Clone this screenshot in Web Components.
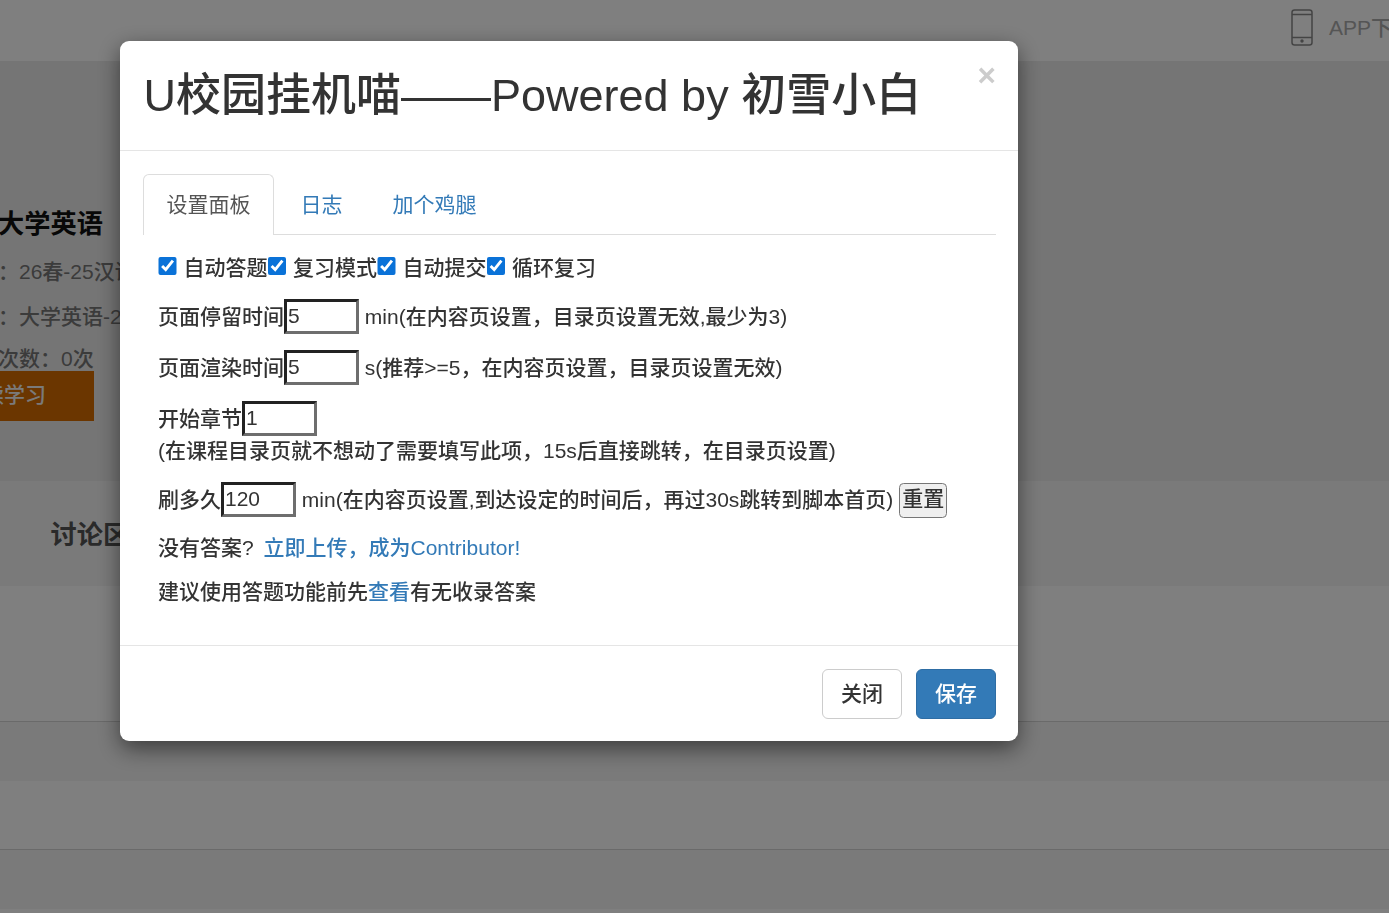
<!DOCTYPE html>
<html lang="zh">
<head>
<meta charset="utf-8">
<title>U校园挂机喵</title>
<style>
  html, body { margin: 0; height: 100%; overflow: hidden; }
  body { font: 500 21px/30px "Liberation Sans", "Noto Sans CJK SC", sans-serif; color: #333; }
</style>
</head>
<body>
<course-page></course-page>
<modal-backdrop></modal-backdrop>
<settings-modal></settings-modal>

<script>
// background page
class CoursePage extends HTMLElement {
  constructor() {
    super();
    this.attachShadow({ mode: "open" });
    this.shadowRoot.innerHTML = `
      <style>
        :host { display: block; width: 1389px; height: 913px; overflow: hidden; background: #fff; }
        .top { height: 61px; display: flex; align-items: center; gap: 15px; padding-left: 1290px; }
        .top svg { flex: none; margin-top: -5px; }
        .top span { flex: none; font-size: 21px; color: #aaa; white-space: nowrap; margin-top: -5px; }
        .hero { height: 420px; background: #ebebeb; padding-top: 144px; box-sizing: border-box; }
        .hero h2 { margin: 0 0 7px -2px; font-size: 26.25px; line-height: 38px; color: #111; white-space: nowrap; }
        .hero p { margin: 0 0 1px -2px; line-height: 44px; color: #777; white-space: nowrap; }
        .hero p:nth-of-type(3) { margin-top: -3px; }
        .hero .go { width: 94px; height: 50px; margin-top: -11px; background: #d66c00; color: #f5f5f5; line-height: 47px; padding-right: 48px; box-sizing: border-box; overflow: hidden; white-space: nowrap; direction: rtl; }
        .forum { height: 105px; background: #f5f5f5; box-sizing: border-box; padding: 34px 0 0 50.5px; font-size: 26.25px; line-height: 40px; font-weight: bold; color: #555; white-space: nowrap; }
        .plain { background: #fff; }
        .grey { background: #f5f5f5; }
        .line { border-bottom: 1px solid #d4d4d4; box-sizing: border-box; }
      </style>
      <div class="top">
        <svg width="24" height="38" viewBox="0 0 24 38" fill="none" stroke="#888" stroke-width="1.5">
          <rect x="2" y="1" width="20" height="35" rx="2.5"/>
          <path d="M2 5.5h20M2 28.5h20"/>
          <circle cx="12" cy="32" r="1.7" fill="#888" stroke="none"/>
        </svg>
        <span>APP下载</span>
      </div>
      <div class="hero">
        <h2>大学英语</h2>
        <p>：26春-25汉语</p>
        <p>：大学英语-2</p>
        <p>次数：0次</p>
        <div class="go">继续学习</div>
      </div>
      <div class="forum">讨论区</div>
      <div class="plain line" style="height:136px"></div>
      <div class="grey" style="height:59px"></div>
      <div class="plain line" style="height:69px"></div>
      <div class="grey" style="height:59px"></div>
      <div class="plain" style="height:4px"></div>
    `;
  }
}
customElements.define("course-page", CoursePage);

class ModalBackdrop extends HTMLElement {
  constructor() {
    super();
    this.attachShadow({ mode: "open" });
    this.shadowRoot.innerHTML = `
      <style>
        :host { display: block; position: fixed; inset: 0; background: rgba(0, 0, 0, .5); }
      </style>
    `;
  }
}
customElements.define("modal-backdrop", ModalBackdrop);

class TabItem extends HTMLElement {
  constructor() {
    super();
    this.attachShadow({ mode: "open" });
    this.shadowRoot.innerHTML = `
      <style>
        :host { display: block; height: 61px; box-sizing: border-box; padding: 14.5px 22.5px 0; line-height: 30px; color: #337ab7; margin-right: 3px; border: 1.5px solid transparent; border-bottom: 0; border-radius: 6px 6px 0 0; }
        :host([active]) { color: #555; background: #fff; border-color: #ddd; }
      </style>
      <slot></slot>
    `;
  }
}
customElements.define("tab-item", TabItem);

class TextLink extends HTMLElement {
  constructor() {
    super();
    this.attachShadow({ mode: "open" });
    // no whitespace around the slot, this one sits inline in a sentence
    this.shadowRoot.innerHTML = `<style>:host { display: inline; color: #337ab7; cursor: pointer; }</style><slot></slot>`;
  }
}
customElements.define("text-link", TextLink);

class CheckItem extends HTMLElement {
  constructor() {
    super();
    this.attachShadow({ mode: "open" });
    this.shadowRoot.innerHTML = `
      <style>
        :host { display: flex; align-items: center; }
        input { width: 18.75px; height: 18.75px; margin: 0 6.75px 4px 0; flex: none; accent-color: #0a72d8; }
      </style>
      <input type="checkbox" checked><slot></slot>
    `;
  }
}
customElements.define("check-item", CheckItem);

class NumInput extends HTMLElement {
  constructor() {
    super();
    this.attachShadow({ mode: "open" });
    this.shadowRoot.innerHTML = `
      <style>
        :host { display: inline-block; vertical-align: middle; margin-bottom: 3px; }
        input { display: block; width: 75px; height: 35px; box-sizing: border-box; margin: 0; padding: 0 1px 1px; border: 3px solid; border-color: #222 #6e6e6e #6e6e6e #222; background: #fff; color: #333; font: 21px "Liberation Sans", sans-serif; outline: 0; }
      </style>
      <input>
    `;
    this.shadowRoot.querySelector("input").value = this.getAttribute("value");
  }
}
customElements.define("num-input", NumInput);

class FormRow extends HTMLElement {
  constructor() {
    super();
    this.attachShadow({ mode: "open" });
    this.shadowRoot.innerHTML = `
      <style>
        :host { display: block; margin-bottom: 16px; white-space: nowrap; }
        :host([checks]) { display: flex; }
        :host([field]) { margin-bottom: 13px; }
      </style>
      <slot></slot>
    `;
  }
}
customElements.define("form-row", FormRow);

class PlainButton extends HTMLElement {
  constructor() {
    super();
    this.attachShadow({ mode: "open" });
    this.shadowRoot.innerHTML = `
      <style>
        :host { display: inline-block; box-sizing: border-box; width: 80px; height: 50px; line-height: 47px; text-align: center; border: 1.5px solid #ccc; border-radius: 6px; background: #fff; color: #333; cursor: pointer; }
        :host([primary]) { background: #337ab7; border-color: #2e6da4; color: #fff; }
      </style>
      <slot></slot>
    `;
  }
}
customElements.define("plain-button", PlainButton);

class SettingsModal extends HTMLElement {
  constructor() {
    super();
    this.attachShadow({ mode: "open" });
    this.shadowRoot.innerHTML = `
      <style>
        :host { display: block; position: fixed; left: 120px; top: 41px; width: 898px; height: 700px; box-sizing: border-box; background: #fff; border-radius: 9px; box-shadow: 0 7.5px 22.5px rgba(0, 0, 0, .5); }
        header { height: 110px; box-sizing: border-box; padding: 23px 22px 0 23.5px; border-bottom: 1.5px solid #e5e5e5; display: flex; justify-content: space-between; }
        h4 { margin: 0; font-size: 45px; line-height: 64px; font-weight: 500; color: #333; white-space: nowrap; }
        .close { font-size: 31.5px; line-height: 22px; font-weight: bold; color: #ccc; cursor: pointer; }
        main { height: 494px; box-sizing: border-box; padding: 23px 22px 0 23px; }
        nav { display: flex; border-bottom: 1.5px solid #ddd; height: 61px; box-sizing: border-box; font-weight: 400; }
        .pane { padding: 18px 15px 0; }
        .tight { margin-bottom: 14px; }
        .below { display: block; margin-top: -3px; }
        .upload { margin-left: 4px; }
        footer { height: 96px; box-sizing: border-box; border-top: 1.5px solid #e5e5e5; padding: 23px 22px 0 0; display: flex; justify-content: flex-end; gap: 14px; }
        button { vertical-align: middle; box-sizing: border-box; width: 48px; height: 35px; margin: 0 0 2px; padding: 0 0 2px; font: 500 21px/30px "Liberation Sans", "Noto Sans CJK SC", sans-serif; color: #333; background: #efefef; border: 1.5px solid #767676; border-radius: 4.5px; }
      </style>
      <header>
        <h4>U校园挂机喵——Powered by 初雪小白</h4>
        <span class="close">×</span>
      </header>
      <main>
        <nav>
          <tab-item active>设置面板</tab-item>
          <tab-item>日志</tab-item>
          <tab-item>加个鸡腿</tab-item>
        </nav>
        <div class="pane">
          <form-row checks>
            <check-item>自动答题</check-item>
            <check-item>复习模式</check-item>
            <check-item>自动提交</check-item>
            <check-item>循环复习</check-item>
          </form-row>
          <form-row field>页面停留时间<num-input value="5"></num-input> min(在内容页设置，目录页设置无效,最少为3)</form-row>
          <form-row field>页面渲染时间<num-input value="5"></num-input> s(推荐&gt;=5，在内容页设置，目录页设置无效)</form-row>
          <form-row>开始章节<num-input value="1"></num-input><span class="below">(在课程目录页就不想动了需要填写此项，15s后直接跳转，在目录页设置)</span></form-row>
          <form-row field>刷多久<num-input value="120"></num-input> min(在内容页设置,到达设定的时间后，再过30s跳转到脚本首页) <button>重置</button></form-row>
          <form-row class="tight">没有答案? <text-link class="upload">立即上传，成为Contributor!</text-link></form-row>
          <form-row>建议使用答题功能前先<text-link>查看</text-link>有无收录答案</form-row>
        </div>
      </main>
      <footer>
        <plain-button>关闭</plain-button>
        <plain-button primary>保存</plain-button>
      </footer>
    `;
  }
}
customElements.define("settings-modal", SettingsModal);
</script>
</body>
</html>
